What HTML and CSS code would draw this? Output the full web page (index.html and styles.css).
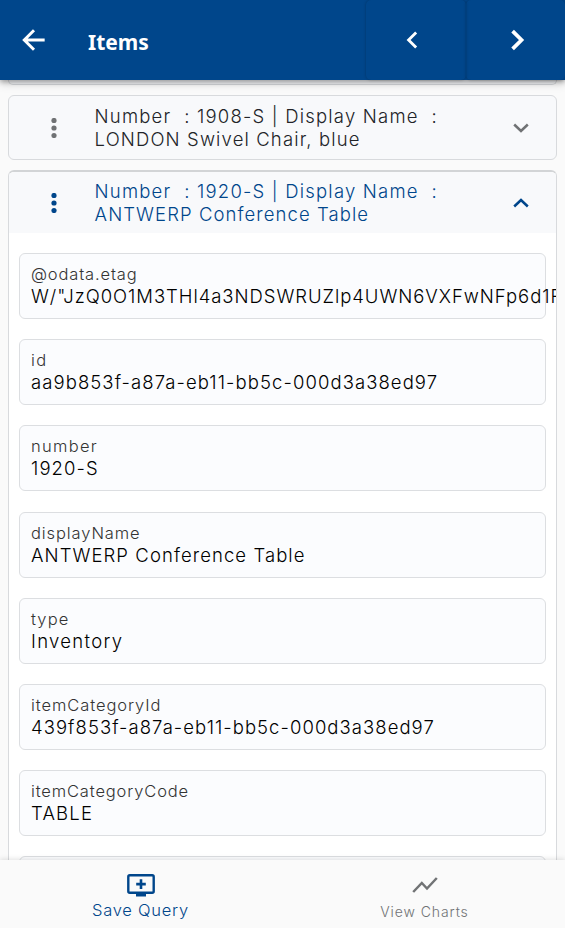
FILE: index.html
```html
<!DOCTYPE html>
<html lang="en">
<head>
<meta charset="utf-8">
<title>Items</title>
<link rel="stylesheet" href="styles.css">
</head>
<body>
<div class="app">
  <header class="topbar">
    <svg class="back" viewBox="0 0 24 24" width="32" height="32"><path d="M20 12H5M12 4.700L4.700 12l7.300 7.300"/></svg>
    <h1>Items</h1>
    <div class="step"><svg class="prev" viewBox="0 0 24 24" width="28" height="28"><path d="M14.700 5.500l-6.500 6.500 6.500 6.500"/></svg></div>
    <div class="step next"><svg viewBox="0 0 24 24" width="32" height="32"><path d="M8.700 5.300l6.700 6.700-6.700 6.700"/></svg></div>
  </header>
  <main class="list">
    <div class="card tail"></div>
    <section class="card summary">
      <svg class="dots" viewBox="0 0 6 20" width="6" height="20"><circle cx="3" cy="2.500" r="2.600"/><circle cx="3" cy="10" r="2.600"/><circle cx="3" cy="17.500" r="2.600"/></svg>
      <div class="title"><div class="t1">Number&nbsp; : 1908-S | Display Name&nbsp; :</div><div class="t2">LONDON Swivel Chair, blue</div></div>
      <svg class="chev" viewBox="0 0 16 10" width="16" height="10"><path d="M1.200 1.500L8 8l6.800-6.500"/></svg>
    </section>
    <section class="card open">
      <div class="summary active">
        <svg class="dots" viewBox="0 0 6 20" width="6" height="20"><circle cx="3" cy="2.500" r="2.600"/><circle cx="3" cy="10" r="2.600"/><circle cx="3" cy="17.500" r="2.600"/></svg>
        <div class="title"><div class="t1">Number&nbsp; : 1920-S | Display Name&nbsp; :</div><div class="t3">ANTWERP Conference Table</div></div>
        <svg class="chev" viewBox="0 0 16 10" width="16" height="10"><path d="M1.200 8.500L8 2l6.800 6.500"/></svg>
      </div>
      <div class="fields">
        <div class="field"><div class="label l1">@odata.etag</div><div class="value v1">W/"JzQ0O1M3THl4a3NDSWRUZlp4UWN6VXFwNFp6d1F</div></div>
        <div class="field"><div class="label l2">id</div><div class="value v2">aa9b853f-a87a-eb11-bb5c-000d3a38ed97</div></div>
        <div class="field"><div class="label l3">number</div><div class="value v3">1920-S</div></div>
        <div class="field"><div class="label l4">displayName</div><div class="value v4">ANTWERP Conference Table</div></div>
        <div class="field"><div class="label l5">type</div><div class="value v5">Inventory</div></div>
        <div class="field"><div class="label l6">itemCategoryId</div><div class="value v6">439f853f-a87a-eb11-bb5c-000d3a38ed97</div></div>
        <div class="field"><div class="label l7">itemCategoryCode</div><div class="value v7">TABLE</div></div>
        <div class="field"></div>
      </div>
    </section>
  </main>
  <nav class="tabs">
    <div class="tab selected">
      <svg viewBox="0 0 28 24" width="28" height="24"><rect x="1.300" y="2.200" width="25.400" height="17.600" rx="1.500" fill="none" stroke="currentColor" stroke-width="2.400"/><path d="M9 20h10v3.600H9zM12.700 6.300h2.600v3.500h3.500v2.600h-3.500v3.500h-2.600v-3.500H9.200V9.800h3.500z" fill="currentColor"/></svg>
      <span class="save">Save Query</span>
    </div>
    <div class="tab">
      <svg viewBox="0 0 26 18" width="26" height="18"><path d="M1.200 16l8.600-9 5.200 5.500L24.800 2" fill="none" stroke="currentColor" stroke-width="2.500"/></svg>
      <span class="view">View Charts</span>
    </div>
  </nav>
</div>
</body>
</html>
```
FILE: styles.css
```css
* { box-sizing: border-box; }
body { margin: 0; font-family: Inter, "Noto Sans", sans-serif; font-weight: 300; }
svg { display: block; flex: none; }
.app { display: flex; flex-direction: column; height: 928px; overflow: hidden; background: #fafafa; }
.topbar { display: flex; align-items: center; height: 80px; flex: none; background: #00468b; color: #fff; z-index: 2; box-shadow: 0 2px 5px rgba(0,0,0,.3), 0 4px 9px rgba(0,0,0,.14); }
.topbar svg { fill: none; stroke: #fff; stroke-width: 2.2; }
.topbar .back { margin-left: 18px; }
h1 { flex: 1; margin: 3px 0 0 38px; font: 700 21px/30px "Noto Sans", sans-serif; }
.step { width: 100px; height: 80px; display: flex; align-items: center; justify-content: center; border-radius: 5px; box-shadow: 0 0 3px rgba(0,0,0,.28); }
.topbar .next svg { stroke-width: 2.8; position: relative; left: 1px; }
.topbar .prev { position: relative; left: -3px; stroke-width: 2.4; }
.next { width: 99px; }
.list { flex: 1; min-height: 0; overflow: hidden; padding: 0 8px; }
.card { border: 1px solid #d8dadd; border-radius: 6px; background: #f8f9fb; }
.tail { height: 5px; border-top: 0; border-radius: 0 0 6px 6px; margin-bottom: 10px; }
.summary { display: flex; align-items: center; height: 65px; padding: 0 27px 0 42px; color: #222428; }
.dots { fill: #707274; }
.title { flex: 1; margin-left: 37.6px; font-size: 18.5px; line-height: 23px; white-space: nowrap; }
.t1 { letter-spacing: 1.2px; }
.t2 { letter-spacing: 1.13px; }
.t3, .v4 { letter-spacing: 1.08px; }
.chev { fill: none; stroke: #707274; stroke-width: 2.5; }
.open { margin-top: 10px; background: #fff; border-top: 2px solid #d2d4d6; overflow: hidden; }
.active { height: 61px; padding-top: 1px; background: #f8f9fb; color: #00468b; }
.active .dots { fill: #00468b; }
.active .chev { stroke: #00468b; }
.fields { padding: 20px 10px 0; display: grid; grid-template-columns: minmax(0, 1fr); gap: 20.2px; }
.field { height: 66px; border: 1px solid #dcdee1; border-radius: 6px; background: #fbfcfe; padding: 9px 11px; white-space: nowrap; }
.label { font-size: 16.5px; line-height: 22px; color: #333; }
.value { font-size: 18.5px; line-height: 23px; color: #000; }
.v1 { letter-spacing: .95px; }
.v2 { letter-spacing: 1.08px; }
.v3 { letter-spacing: 1.1px; }
.v5 { letter-spacing: 1.3px; }
.v6 { letter-spacing: 1.05px; }
.v7 { letter-spacing: 1.2px; }
.l1 { letter-spacing: .85px; }
.l2 { letter-spacing: 1.5px; }
.l3 { letter-spacing: 1.3px; }
.l4 { letter-spacing: .9px; }
.l5 { letter-spacing: 1.1px; }
.l6 { letter-spacing: .92px; }
.l7 { letter-spacing: .85px; }
.tabs { flex: none; height: 68px; display: grid; grid-template-columns: 281px 287px; background: #fafafa; z-index: 2; box-shadow: 0 -1px 5px rgba(0,0,0,.12); }
.tab { display: flex; flex-direction: column; align-items: center; padding-top: 16px; color: #717375; font-size: 14px; line-height: 20px; }
.tab span { margin-top: 8px; }
.selected { padding-top: 13px; color: #00468b; font-size: 16.5px; }
.tab .save { margin-top: 3px; letter-spacing: .75px; }
.view { letter-spacing: .9px; }
```
